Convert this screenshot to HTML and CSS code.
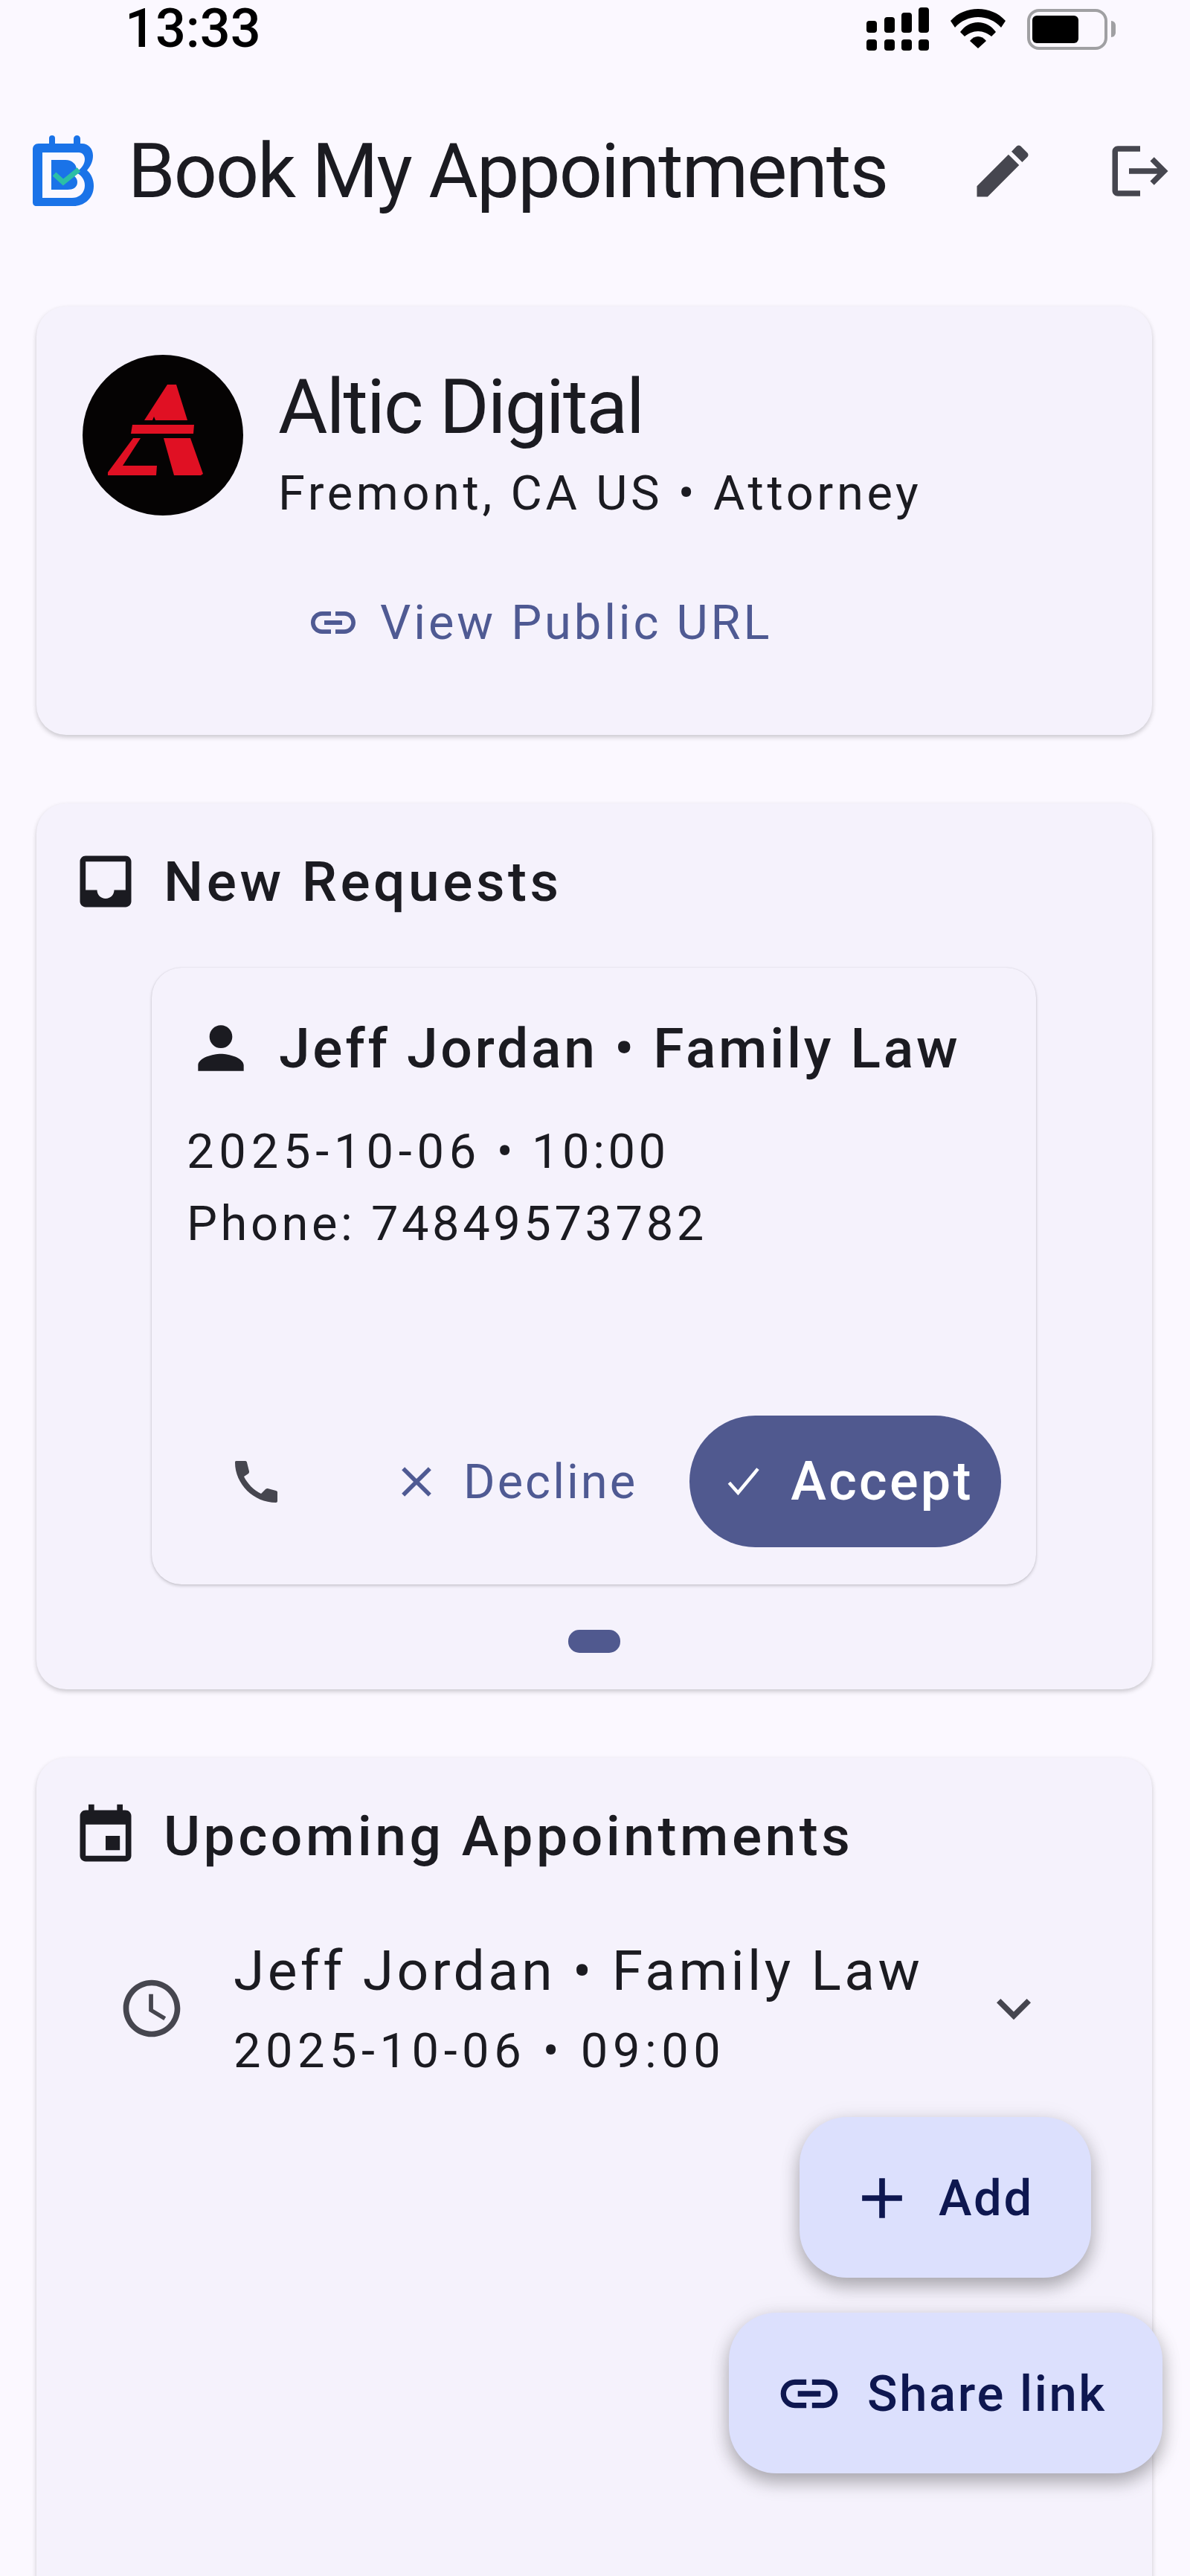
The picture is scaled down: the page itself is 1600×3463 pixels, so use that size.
FILE: index.html
```html
<!DOCTYPE html>
<html lang="en">
  <head>
    <meta charset="UTF-8" />
    <meta name="viewport" content="width=device-width, initial-scale=1.0" />
    <title>Book My Appointments</title>
    <link rel="stylesheet" href="styles.css">
  </head>
  <body>
    <div class="status-bar">
      <span class="time">13:33</span>
      <div class="status-icons">
        <svg class="signal" viewBox="0 0 84 58" width="84" height="58">
          <rect x="0" y="18" width="14" height="16" rx="4" />
          <rect x="24" y="13" width="14" height="21" rx="4" />
          <rect x="47" y="7" width="14" height="27" rx="4" />
          <rect x="70" y="0" width="14" height="34" rx="4" />
          <rect x="0" y="43" width="14" height="15" rx="4" />
          <rect x="24" y="43" width="14" height="15" rx="4" />
          <rect x="47" y="43" width="14" height="15" rx="4" />
          <rect x="70" y="43" width="14" height="15" rx="4" />
        </svg>
        <svg class="wifi" viewBox="0 0 74 54" width="74" height="54">
          <path d="M0 16C10 5 23 0 37 0s27 5 37 16l-6 9C60 16 49 11 37 11S14 16 6 25z" />
          <path d="M13 31c6-8 14-13 24-13s18 5 24 13l-6 6c-5-4-11-7-18-7s-13 3-18 7z" />
          <path d="M26 43c3-4 7-6 11-6s8 2 11 6L37 53z" />
        </svg>
        <div class="battery">
          <div class="battery-body"><div class="battery-fill"></div></div>
          <div class="battery-tip"></div>
        </div>
      </div>
    </div>

    <header class="app-bar">
      <svg class="logo" viewBox="0 0 82 96" width="82" height="96">
        <path fill="#1a73e8" fill-rule="evenodd" d="M8 11H22V4a4 4 0 0 1 8 0V11H55V4.500a4.500 4.500 0 0 1 9 0V11H66C75 11 81 18 81 27C81 35 78 41 73 47C79 52 82 60 82 68C82 84 70 95 55 95H5C2 95 0 93 0 90V19C0 14 3 11 8 11ZM13 23V84H53C63 84 70 77 70 67C70 59 65 53 58 50C65 45 70 39 70 32C70 27 67 23 62 23Z" />
        <path fill="#1a73e8" d="M25 33H44C53 33 59 39 59 46C59 50 57 52 55 54C59 57 60 60 60 63C60 70 54 73 47 73H25Z" />
        <path fill="none" stroke="#2bbfa6" stroke-width="7" d="M29 52L41 63L62 46" />
      </svg>
      <h1 class="app-title">Book My Appointments</h1>
      <div class="app-actions">
        <svg class="action-edit" viewBox="0 0 24 24" width="92" height="92">
          <path d="M3 17.25V21h3.75L17.81 9.94l-3.75-3.75L3 17.25zM20.71 7.04c.39-.39.39-1.02 0-1.41l-2.34-2.34c-.39-.39-1.02-.39-1.41 0l-1.83 1.83 3.75 3.75 1.83-1.83z" />
        </svg>
        <svg class="action-logout" viewBox="0 0 24 24" width="90" height="90">
          <path d="M17 7l-1.41 1.41L18.17 11H8v2h10.17l-2.58 2.58L17 17l5-5zM4 5h8V3H4c-1.1 0-2 .9-2 2v14c0 1.1.9 2 2 2h8v-2H4V5z" />
        </svg>
      </div>
    </header>

    <main class="content">
      <section class="card profile-card">
        <div class="profile-head">
          <svg class="avatar" viewBox="0 0 216 216" width="216" height="216">
            <circle cx="108" cy="108" r="108" fill="#050303" />
            <g fill="#e01023">
              <path d="M83 88L114 40H126L141 88H98L96 83L94 88Z" />
              <path d="M67 94H150L149 106H65Z" />
              <path d="M68 112H78L54 149H100L99 162H34V158Z" />
              <path d="M109 112H145L162 160L159 162H123Z" />
            </g>
          </svg>
          <div class="profile-text">
            <div class="profile-name">Altic Digital</div>
            <div class="profile-meta">Fremont, CA US • Attorney</div>
          </div>
        </div>
        <div class="public-link">
          <svg viewBox="0 0 24 24" width="72" height="72">
            <path d="M3.9 12c0-1.71 1.39-3.1 3.1-3.1h4V7H7c-2.76 0-5 2.24-5 5s2.24 5 5 5h4v-1.9H7c-1.71 0-3.1-1.39-3.1-3.1zM8 13h8v-2H8v2zm9-6h-4v1.9h4c1.71 0 3.1 1.39 3.1 3.1s-1.39 3.1-3.1 3.1h-4V17h4c2.76 0 5-2.24 5-5s-2.24-5-5-5z" />
          </svg>
          <span>View Public URL</span>
        </div>
      </section>

      <section class="card requests-card">
        <div class="section-head">
          <svg viewBox="0 0 24 24" width="92" height="92">
            <path d="M19 3H5c-1.1 0-2 .9-2 2v14c0 1.1.9 2 2 2h14c1.1 0 2-.9 2-2V5c0-1.1-.9-2-2-2zm0 12h-4c0 1.66-1.34 3-3 3s-3-1.34-3-3H5V5h14v10z" />
          </svg>
          <h2>New Requests</h2>
        </div>

        <div class="request-card">
          <div class="request-title">
            <svg viewBox="0 0 24 24" width="92" height="92">
              <path d="M12 12c2.21 0 4-1.79 4-4s-1.79-4-4-4-4 1.79-4 4 1.79 4 4 4zm0 2c-2.67 0-8 1.34-8 4v2h16v-2c0-2.66-5.33-4-8-4z" />
            </svg>
            <span>Jeff Jordan • Family Law</span>
          </div>
          <div class="request-info"><span class="date-part">2025-10-06</span> • 10:00</div>
          <div class="request-info">Phone: 74849573782</div>
          <div class="request-actions">
            <svg class="call-icon" viewBox="0 0 57 57" width="57" height="57">
              <path d="M0 3C0 1 1 1 3 1H14C15 1 16 2 16 3L19 15C19 16 19 17 18 18L12 22C17 32 25 40 35 45L41 39C42 38 43 38 44 38L55 41C56 41 57 42 57 43V55C57 56 56 57 55 57C25 57 0 32 0 3Z" />
            </svg>
            <div class="decline">
              <svg viewBox="0 0 24 24" width="68" height="68">
                <path d="M19 6.41L17.59 5 12 10.59 6.41 5 5 6.41 10.59 12 5 17.59 6.41 19 12 13.41 17.59 19 19 17.59 13.41 12z" />
              </svg>
              <span>Decline</span>
            </div>
            <div class="accept">
              <svg viewBox="0 0 24 24" width="64" height="64">
                <path d="M5 12.5l4.5 5L19.5 5.5" fill="none" stroke="#fff" stroke-width="1.7" />
              </svg>
              <span>Accept</span>
            </div>
          </div>
        </div>

        <div class="pager"><div class="pager-dot"></div></div>
      </section>

      <section class="card upcoming-card">
        <div class="section-head">
          <svg viewBox="0 0 24 24" width="92" height="92">
            <path d="M17 12h-5v5h5v-5zM16 1v2H8V1H6v2H5c-1.11 0-1.99.9-1.99 2L3 19c0 1.1.89 2 2 2h14c1.1 0 2-.9 2-2V5c0-1.1-.9-2-2-2h-1V1h-2zm3 18H5V8h14v11z" />
          </svg>
          <h2>Upcoming Appointments</h2>
        </div>
        <div class="appointment">
          <svg class="clock" viewBox="0 0 24 24" width="92" height="92">
            <path d="M11.99 2C6.47 2 2 6.48 2 12s4.47 10 9.99 10C17.52 22 22 17.52 22 12S17.52 2 11.99 2zM12 20c-4.42 0-8-3.58-8-8s3.58-8 8-8 8 3.58 8 8-3.58 8-8 8zm.5-13H11v6l5.25 3.15.75-1.23-4.5-2.67z" />
          </svg>
          <div class="appointment-text">
            <div class="appointment-name">Jeff Jordan • Family Law</div>
            <div class="appointment-date">2025-10-06 • 09:00</div>
          </div>
          <svg class="chevron" viewBox="0 0 24 24" width="92" height="92">
            <path d="M16.59 8.59L12 13.17 7.41 8.59 6 10l6 6 6-6z" />
          </svg>
        </div>
      </section>
    </main>

    <div class="fab fab-add">
      <svg viewBox="0 0 24 24" width="92" height="92">
        <path d="M19 13h-6v6h-2v-6H5v-2h6V5h2v6h6v2z" />
      </svg>
      <span>Add</span>
    </div>
    <div class="fab fab-share">
      <svg viewBox="0 0 24 24" width="92" height="92">
        <path d="M3.9 12c0-1.71 1.39-3.1 3.1-3.1h4V7H7c-2.76 0-5 2.24-5 5s2.24 5 5 5h4v-1.9H7c-1.71 0-3.1-1.39-3.1-3.1zM8 13h8v-2H8v2zm9-6h-4v1.9h4c1.71 0 3.1 1.39 3.1 3.1s-1.39 3.1-3.1 3.1h-4V17h4c2.76 0 5-2.24 5-5s-2.24-5-5-5z" />
      </svg>
      <span>Share link</span>
    </div>
  </body>
</html>
```

FILE: styles.css
```css
html,
body {
  margin: 0;
  height: 3463px;
  overflow: hidden;
}
body {
  position: relative;
  background-color: #fbf8ff;
  color: #1b1b21;
  font-family: Roboto, "Liberation Sans", sans-serif;
}
svg {
  display: block;
  flex-shrink: 0;
  fill: currentColor;
}
h1,
h2 {
  margin: 0;
  font-weight: 400;
}

.status-bar {
  display: flex;
  align-items: center;
  justify-content: space-between;
  height: 76px;
  padding: 2px 100px 0 168px;
  box-sizing: border-box;
  color: #000;
}
.time {
  font-size: 72px;
  font-weight: 500;
  line-height: 74px;
}
.status-icons {
  display: flex;
  align-items: center;
  gap: 29px;
}
.battery {
  display: flex;
  align-items: center;
  gap: 5px;
}
.battery-body {
  box-sizing: border-box;
  width: 108px;
  height: 55px;
  padding: 5px 3px;
  border: 4px solid #a0a0a3;
  border-radius: 16px;
}
.battery-fill {
  width: 62px;
  height: 100%;
  background-color: #000;
  border-radius: 6px;
}
.battery-tip {
  width: 6px;
  height: 22px;
  background-color: #a0a0a3;
  border-radius: 0 6px 6px 0;
}

.app-bar {
  display: flex;
  align-items: center;
  height: 130px;
  margin-top: 89px;
  padding: 0 22px 0 44px;
}
.app-title {
  margin-left: 46px;
  font-size: 102px;
  line-height: 130px;
  letter-spacing: -1.9px;
  white-space: nowrap;
}
.app-actions {
  display: flex;
  align-items: center;
  gap: 94px;
  margin-left: auto;
  color: #46464f;
}

.content {
  display: flex;
  flex-direction: column;
  gap: 92px;
  margin: 0 51px 0 49px;
  padding-top: 117px;
}
.card {
  box-sizing: border-box;
  background-color: #f5f2fc;
  border-radius: 40px;
  box-shadow: 0 3px 6px rgba(0, 0, 0, 0.2);
}

.profile-card {
  height: 576px;
  padding: 65px 0 0 62px;
}
.profile-head {
  display: flex;
  gap: 47px;
}
.profile-text {
  padding-top: 10px;
}
.profile-name {
  font-size: 102px;
  line-height: 120px;
  letter-spacing: -1.9px;
}
.profile-meta {
  margin-top: 14px;
  font-size: 65px;
  line-height: 84px;
  letter-spacing: 4.6px;
}
.public-link {
  display: flex;
  align-items: center;
  gap: 27px;
  margin: 92px 0 0 301px;
  color: #4f5a93;
  font-size: 65px;
  line-height: 80px;
  letter-spacing: 3.9px;
}

.requests-card {
  height: 1191px;
  padding-top: 58px;
}
.section-head {
  display: flex;
  align-items: center;
  gap: 32px;
  padding-left: 47px;
}
.section-head h2 {
  font-size: 75px;
  line-height: 94px;
  font-weight: 500;
  letter-spacing: 4.5px;
}
.request-card {
  box-sizing: border-box;
  height: 829px;
  margin: 69px 156px 0 155px;
  padding: 62px 0 0 47px;
  border-radius: 40px;
  background-color: #f5f2fc;
  box-shadow: 0 2px 4px rgba(0, 0, 0, 0.18), 0 0 2px rgba(0, 0, 0, 0.1);
}
.request-title {
  display: flex;
  align-items: center;
  gap: 32px;
  margin: 0 0 45px 0;
  font-size: 75px;
  line-height: 92px;
  font-weight: 500;
  letter-spacing: 3.7px;
}
.request-info {
  font-size: 65px;
  line-height: 97px;
  letter-spacing: 4.55px;
}
.date-part {
  letter-spacing: 6.8px;
}
.request-actions {
  display: flex;
  align-items: center;
  margin-top: 209px;
  color: #4f5a93;
}
.call-icon {
  margin-left: 65px;
  color: #46464f;
}
.decline {
  display: flex;
  align-items: center;
  gap: 29px;
  margin-left: 153px;
  font-size: 65px;
  letter-spacing: 3px;
}
.accept {
  display: flex;
  align-items: center;
  gap: 32px;
  box-sizing: border-box;
  width: 419px;
  height: 177px;
  margin-left: 70px;
  padding-left: 40px;
  border-radius: 89px;
  background-color: #50598f;
  color: #fff;
  font-size: 72px;
  font-weight: 500;
  letter-spacing: 3.3px;
}
.pager {
  display: flex;
  justify-content: center;
  margin-top: 61px;
}
.pager-dot {
  width: 70px;
  height: 31px;
  border-radius: 15px;
  background-color: #50598f;
}

.upcoming-card {
  height: 1200px;
  padding-top: 58px;
  border-radius: 40px 40px 0 0;
}
.appointment {
  display: flex;
  align-items: center;
  margin-top: 87px;
  padding: 0 140px 0 109px;
}
.clock {
  color: #46464f;
}
.appointment-text {
  margin-left: 64px;
}
.appointment-name {
  font-size: 75px;
  line-height: 95px;
  letter-spacing: 4.35px;
}
.appointment-date {
  margin-top: 20px;
  font-size: 65px;
  line-height: 80px;
  letter-spacing: 6.5px;
}
.chevron {
  margin-left: auto;
  color: #46464f;
}

.fab {
  position: absolute;
  display: flex;
  align-items: center;
  box-sizing: border-box;
  height: 216px;
  border-radius: 64px;
  background-color: #dce0fd;
  color: #0e1750;
  font-size: 67px;
  font-weight: 500;
  letter-spacing: 2.6px;
  box-shadow: 0 12px 24px rgba(0, 0, 0, 0.28), 0 2px 30px rgba(0, 0, 0, 0.08);
}
.fab-add {
  left: 1075px;
  top: 2846px;
  width: 392px;
  padding: 2px 0 0 65px;
  gap: 30px;
}
.fab-share {
  left: 980px;
  top: 3109px;
  width: 583px;
  padding: 2px 0 0 62px;
  gap: 32px;
}
```
